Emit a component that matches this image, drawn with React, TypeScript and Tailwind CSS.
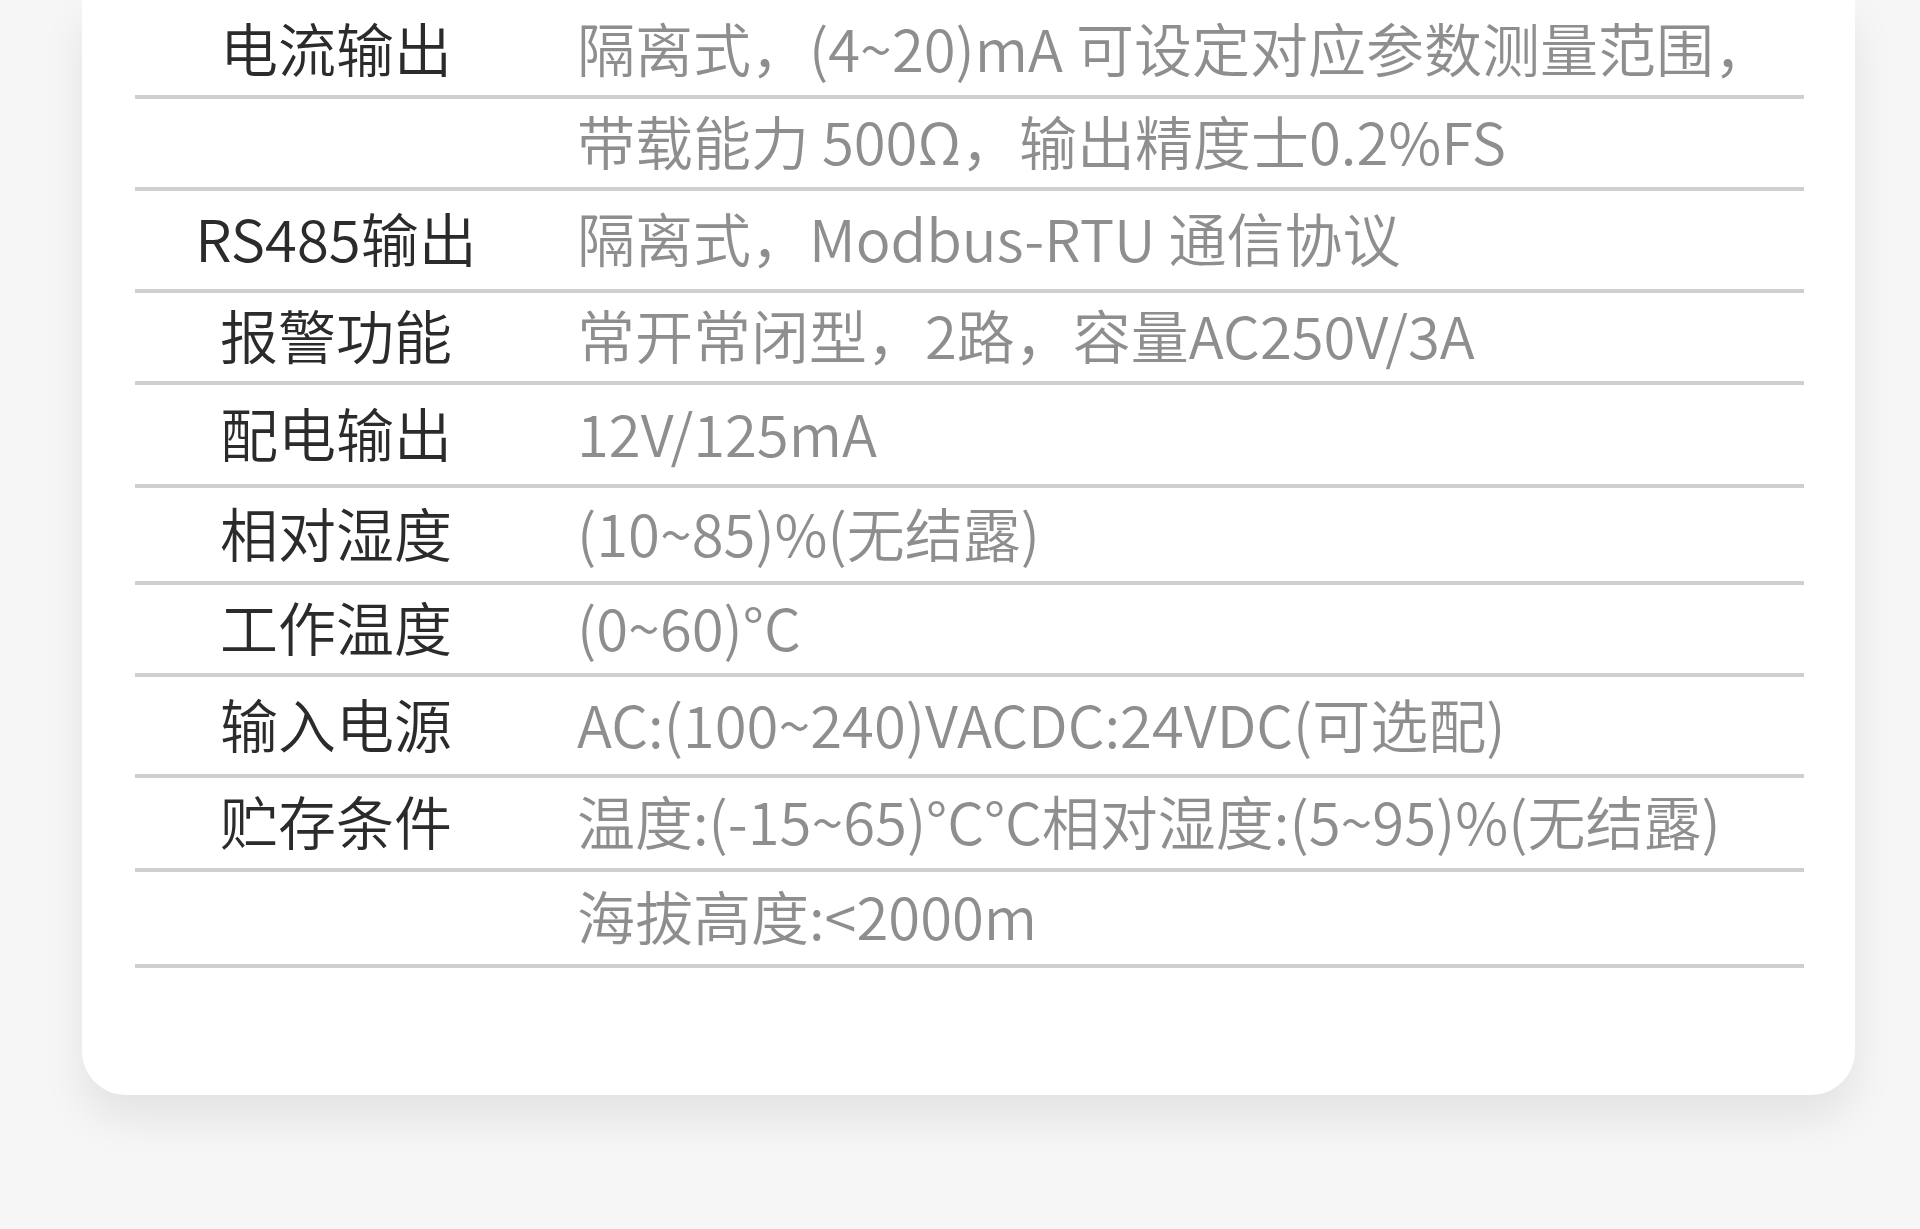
const rows: { label: string; value: string; h: number }[] = [
  { label: '电流输出', value: '隔离式，(4~20)mA 可设定对应参数测量范围，', h: 91 },
  { label: '', value: '带载能力 500Ω，输出精度士0.2%FS', h: 88 },
  { label: 'RS485输出', value: '隔离式，Modbus-RTU 通信协议', h: 98 },
  { label: '报警功能', value: '常开常闭型，2路，容量AC250V/3A', h: 88 },
  { label: '配电输出', value: '12V/125mA', h: 99 },
  { label: '相对湿度', value: '(10~85)%(无结露)', h: 93 },
  { label: '工作温度', value: '(0~60)°C', h: 88 },
  { label: '输入电源', value: 'AC:(100~240)VACDC:24VDC(可选配)', h: 97 },
  { label: '贮存条件', value: '温度:(-15~65)°C°C相对湿度:(5~95)%(无结露)', h: 90 },
  { label: '', value: '海拔高度:<2000m', h: 92 },
];

export default function App() {
  return (
    <div
      className="min-h-screen w-full overflow-hidden bg-[#f7f6f7]"
      style={{ fontFamily: '"Noto Sans CJK SC", "Noto Sans", sans-serif' }}
    >
      <div className="ml-[82px] mr-[65px] flex h-[1095px] flex-col rounded-b-[44px] bg-white shadow-[0_24px_44px_rgba(0,0,0,0.08)]">
        <div className="ml-[53px] mr-[51px] flex flex-col pt-[4px]">
          {rows.map((r, i) => (
            <div
              key={i}
              className="flex items-center border-b-4 border-[#cfcfcf] pb-[6px]"
              style={{ height: r.h + 4 }}
            >
              <div className="w-[402px] shrink-0 text-center text-[58px] font-[350] leading-none text-[#2b2b2b]">
                {r.label}
              </div>
              <div className="whitespace-nowrap pl-[40px] text-[58px] font-[350] leading-none text-[#8e8e8e]">
                {r.value}
              </div>
            </div>
          ))}
        </div>
      </div>
    </div>
  );
}
